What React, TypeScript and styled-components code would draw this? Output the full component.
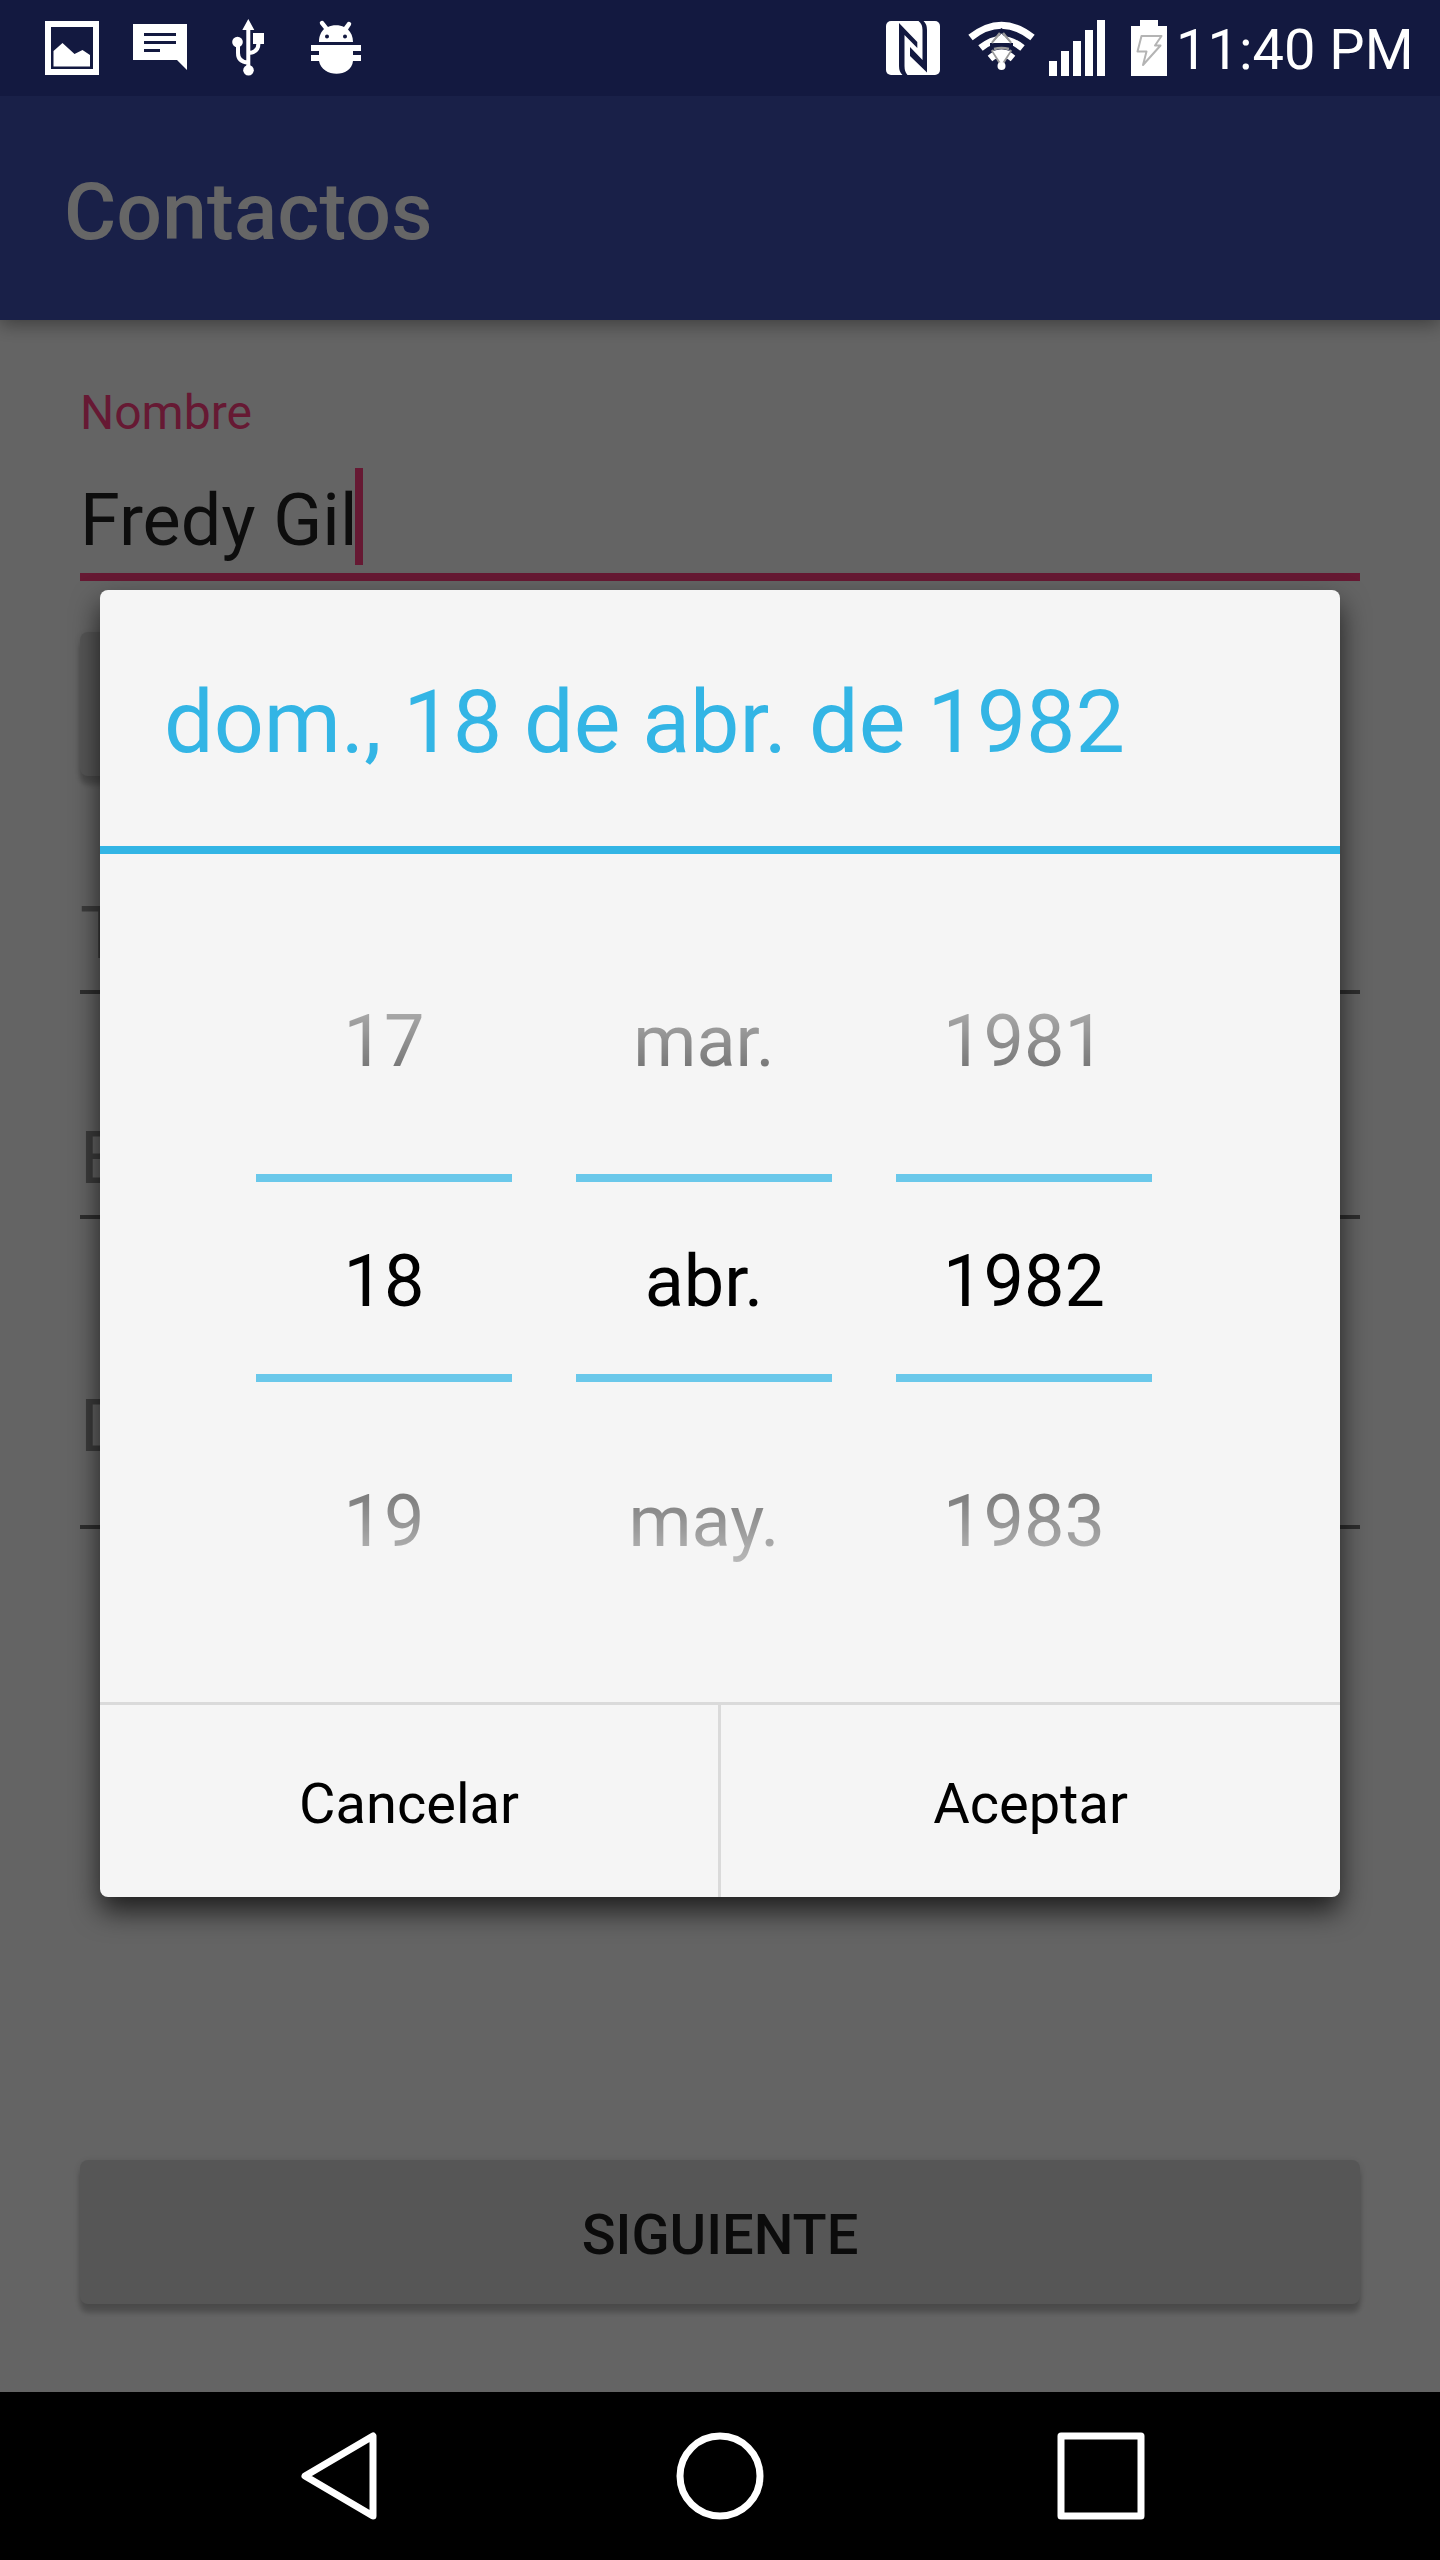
import React from "react";
import styled, { createGlobalStyle } from "styled-components";

const Global = createGlobalStyle`
  body { margin: 0; background: #000; }
  * { box-sizing: border-box; }
`;

const Screen = styled.div`
  position: relative;
  width: 1440px;
  height: 2560px;
  display: flex;
  flex-direction: column;
  overflow: hidden;
  font-family: Roboto, "Noto Sans", sans-serif;
  background: #fafafa;
`;

const StatusBar = styled.header`
  position: relative;
  z-index: 2;
  flex: none;
  display: flex;
  justify-content: space-between;
  height: 96px;
  background: #131940;
  color: #fff;
`;

const AppBar = styled.div`
  flex: none;
  height: 224px;
  display: flex;
  align-items: center;
  padding: 8px 0 0 64px;
  background: #3f51b5;
  box-shadow: 0 4px 18px rgba(0, 0, 0, 0.4);
`;

const AppTitle = styled.h1`
  margin: 0;
  font-size: 80px;
  font-weight: 500;
  letter-spacing: 0.3px;
  color: #fff;
`;

const Form = styled.main`
  flex: 1;
  display: flex;
  flex-direction: column;
  padding: 65px 80px 88px;
`;

const Label = styled.label`
  height: 56px;
  font-size: 48px;
  line-height: 56px;
  color: #ff4081;
`;

const ActiveInput = styled.div`
  display: flex;
  align-items: flex-start;
  height: 140px;
  padding-top: 27px;
  border-bottom: 8px solid #ff4081;
`;

const Value = styled.span`
  height: 97px;
  font-size: 72px;
  line-height: 105px;
  color: rgba(0, 0, 0, 0.87);
`;

const Caret = styled.i`
  width: 8px;
  height: 97px;
  margin-left: -2px;
  background: #ff4081;
`;

const Raised = styled.button<{ $top: string; $width?: string }>`
  flex: none;
  width: ${(p) => p.$width ?? "100%"};
  height: 144px;
  margin-top: ${(p) => p.$top};
  padding: 0;
  border: 0;
  border-radius: 8px;
  background: #d6d7d7;
  box-shadow: 0 9px 5px rgba(0, 0, 0, 0.2), 0 2px 8px rgba(0, 0, 0, 0.14);
  font: 500 56px/66px Roboto, sans-serif;
  padding-top: 6px;
  color: rgba(0, 0, 0, 0.87);
`;

const Hint = styled.div<{ $top: number; $height: number }>`
  flex: none;
  height: ${(p) => p.$height}px;
  margin-top: ${(p) => p.$top}px;
  border-bottom: 4px solid rgba(0, 0, 0, 0.54);
  font-size: 72px;
  line-height: 87px;
  color: rgba(0, 0, 0, 0.4);
`;

const NavBar = styled.nav`
  position: relative;
  z-index: 2;
  flex: none;
  display: flex;
  justify-content: center;
  height: 168px;
  background: #000;
`;

const Scrim = styled.div`
  position: absolute;
  inset: 0;
  z-index: 1;
  padding: 590px 100px 0;
  background: rgba(0, 0, 0, 0.6);
`;

const Dialog = styled.section`
  display: flex;
  flex-direction: column;
  height: 1307px;
  overflow: hidden;
  border-radius: 8px;
  background: #f5f5f5;
  box-shadow: 0 14px 28px rgba(0, 0, 0, 0.7);
`;

const DialogTitle = styled.h2`
  flex: none;
  height: 264px;
  margin: 0;
  padding: 4px 0 0 64px;
  border-bottom: 8px solid #33b5e5;
  font-size: 88px;
  font-weight: 400;
  line-height: 256px;
  color: #33b5e5;
`;

const Pickers = styled.div`
  flex: 1;
  display: flex;
  gap: 64px;
  padding: 64px 0 0 156px;
`;

const Picker = styled.div`
  display: grid;
  grid-template-rows: 256px 208px 256px;
  width: 256px;
  height: 720px;
  font-size: 72px;
  line-height: 84px;
  text-align: center;
  color: #000;
`;

const Faded = styled.div<{ $edge: "top" | "bottom" }>`
  padding-top: ${(p) => (p.$edge === "top" ? 82 : 98)}px;
  mask-image: linear-gradient(
    to ${(p) => (p.$edge === "top" ? "bottom" : "top")},
    transparent 9px,
    rgba(0, 0, 0, 0.9) 256px
  );
`;

const Selected = styled.div`
  padding-top: 58px;
  border-top: 8px solid #6ac8ea;
  border-bottom: 8px solid #6ac8ea;
`;

const Actions = styled.footer`
  flex: none;
  display: flex;
  height: 195px;
  border-top: 3px solid #dadada;
`;

const Action = styled.button`
  width: 618px;
  padding: 5px 0 0;
  border: 0;
  background: none;
  font: 400 56px/66px Roboto, sans-serif;
  color: #000;
  & + & {
    width: 622px;
    border-left: 3px solid #dadada;
  }
`;

const Clock = styled.span`
  width: 264px;
  padding-top: 17px;
  font-size: 56px;
  line-height: 66px;
  white-space: nowrap;
`;

const RightStatus = styled.div`
  display: flex;
`;

const columns = [
  ["17", "18", "19"],
  ["mar.", "abr.", "may."],
  ["1981", "1982", "1983"],
];

const NotificationIcons = () => (
  <svg width="400" height="96" viewBox="0 0 400 96" fill="#fff">
    <path fillRule="evenodd" d="M45 21h54v54H45zM51 27v42h42V27z" />
    <path d="M53.500 51l9-8 12 11 8-4 7.500 5v11.500h-36.500z" />
    <path fillRule="evenodd" d="M133 24h54v46l-10-10h-44zM144 33v3h32v-3zM144 41v3h32v-3zM144 49v3h16v-3z" />
    <g fill="none" stroke="#fff" strokeWidth="4">
      <path d="M248.300 28v38M238 44v9q0 9 10 9.500M258.500 41v2q0 9-9 10" />
    </g>
    <path d="M248.300 19l6 11h-12zM253 33h11v11h-11z" />
    <circle cx="237.500" cy="42" r="5.300" />
    <circle cx="248.500" cy="70.300" r="5.300" />
    <path fillRule="evenodd" d="M319 42c0-6 2-10 5-13l-4-5a2 2 0 0 1 4-2l4 5c4-2.500 12-2.500 16 0l3-4a2 2 0 0 1 4 2l-3 4.500c3 3 5 7 5 12.500zM325 36.500a2 2 0 1 0 4 0a2 2 0 1 0-4 0M343 36.500a2 2 0 1 0 4 0a2 2 0 1 0-4 0" />
    <path d="M311 45h50v6h-8v4h8v6h-8c-1.500 17-31 17-34 0h-8v-6h8v-4h-8z" />
  </svg>
);

const SystemIcons = () => (
  <svg width="298" height="96" viewBox="878 0 298 96">
    <rect x="886" y="21" width="54" height="54" rx="5" fill="#fff" />
    <path fill="#131940" d="M899 23L917.300 42v6L904.500 35v31q0 6 3 9h-5q-3.500-3-3.500-9z" />
    <path fill="#131940" d="M927 72.500L910 56v-9l12.500 13V30q0-6-4-9h5q3.500 3 3.500 9z" />
    <g fill="none" stroke="#fff" strokeWidth="7">
      <path d="M970.500 37.500q31-24.500 62 0M980.500 48q21-17 42 0M990 58.500q11.500-10 23 0" />
    </g>
    <path fill="#131940" d="M990 43h23v6h-23zM995 34l6.500-6 6.500 6z" />
    <path fill="none" stroke="#9a9a9a" strokeWidth="2.500" d="M992 43l8-10M1011 43l-8-10M992 50l8 13M1011 50l-8 13M994 49q7.500-2 15 0" />
    <path fill="#fff" d="M1001.500 33.500l8.500 9.500h-17zM993 51q8.500-3 17 0l-8.500 13z" />
    <circle cx="1001.500" cy="66" r="4" fill="#fff" />
    <path fill="#fff" d="M1049 61h8v15h-8zM1061 51h8v25h-8zM1073 41h8v35h-8zM1085 30h8v46h-8zM1097 20h8v56h-8zM1131 26h9v-6h18v6h9v50h-36z" />
    <path fill="none" stroke="#b4b4b4" strokeWidth="2" strokeLinejoin="round" d="M1141.500 36H1161.500L1155 45.500H1160.500L1143 65 1146.500 51.500H1137.500z" />
  </svg>
);

const NavIcons = () => (
  <svg width="1440" height="168" viewBox="0 2392 1440 168" fill="none" stroke="#fff" strokeWidth="7" strokeLinejoin="round">
    <path d="M373 2436v80l-68-40z" />
    <circle cx="720" cy="2476" r="40" />
    <rect x="1061" y="2436" width="80" height="80" />
  </svg>
);

export default function App() {
  return (
    <Screen>
      <Global />
      <StatusBar>
        <NotificationIcons />
        <RightStatus>
          <SystemIcons />
          <Clock>11:40 PM</Clock>
        </RightStatus>
      </StatusBar>
      <AppBar>
        <AppTitle>Contactos</AppTitle>
      </AppBar>
      <Form>
        <Label>Nombre</Label>
        <ActiveInput>
          <Value>Fredy Gil</Value>
          <Caret />
        </ActiveInput>
        <Raised $top="51px" $width="50%" />
        <Hint $top={114} $height={104}>T</Hint>
        <Hint $top={121} $height={104}>E</Hint>
        <Hint $top={164} $height={146}>D</Hint>
        <Raised $top="auto">SIGUIENTE</Raised>
      </Form>
      <NavBar>
        <NavIcons />
      </NavBar>
      <Scrim>
        <Dialog>
          <DialogTitle>dom., 18 de abr. de 1982</DialogTitle>
          <Pickers>
            {columns.map(([before, current, after]) => (
              <Picker key={current}>
                <Faded $edge="top">{before}</Faded>
                <Selected>{current}</Selected>
                <Faded $edge="bottom">{after}</Faded>
              </Picker>
            ))}
          </Pickers>
          <Actions>
            <Action>Cancelar</Action>
            <Action>Aceptar</Action>
          </Actions>
        </Dialog>
      </Scrim>
    </Screen>
  );
}
